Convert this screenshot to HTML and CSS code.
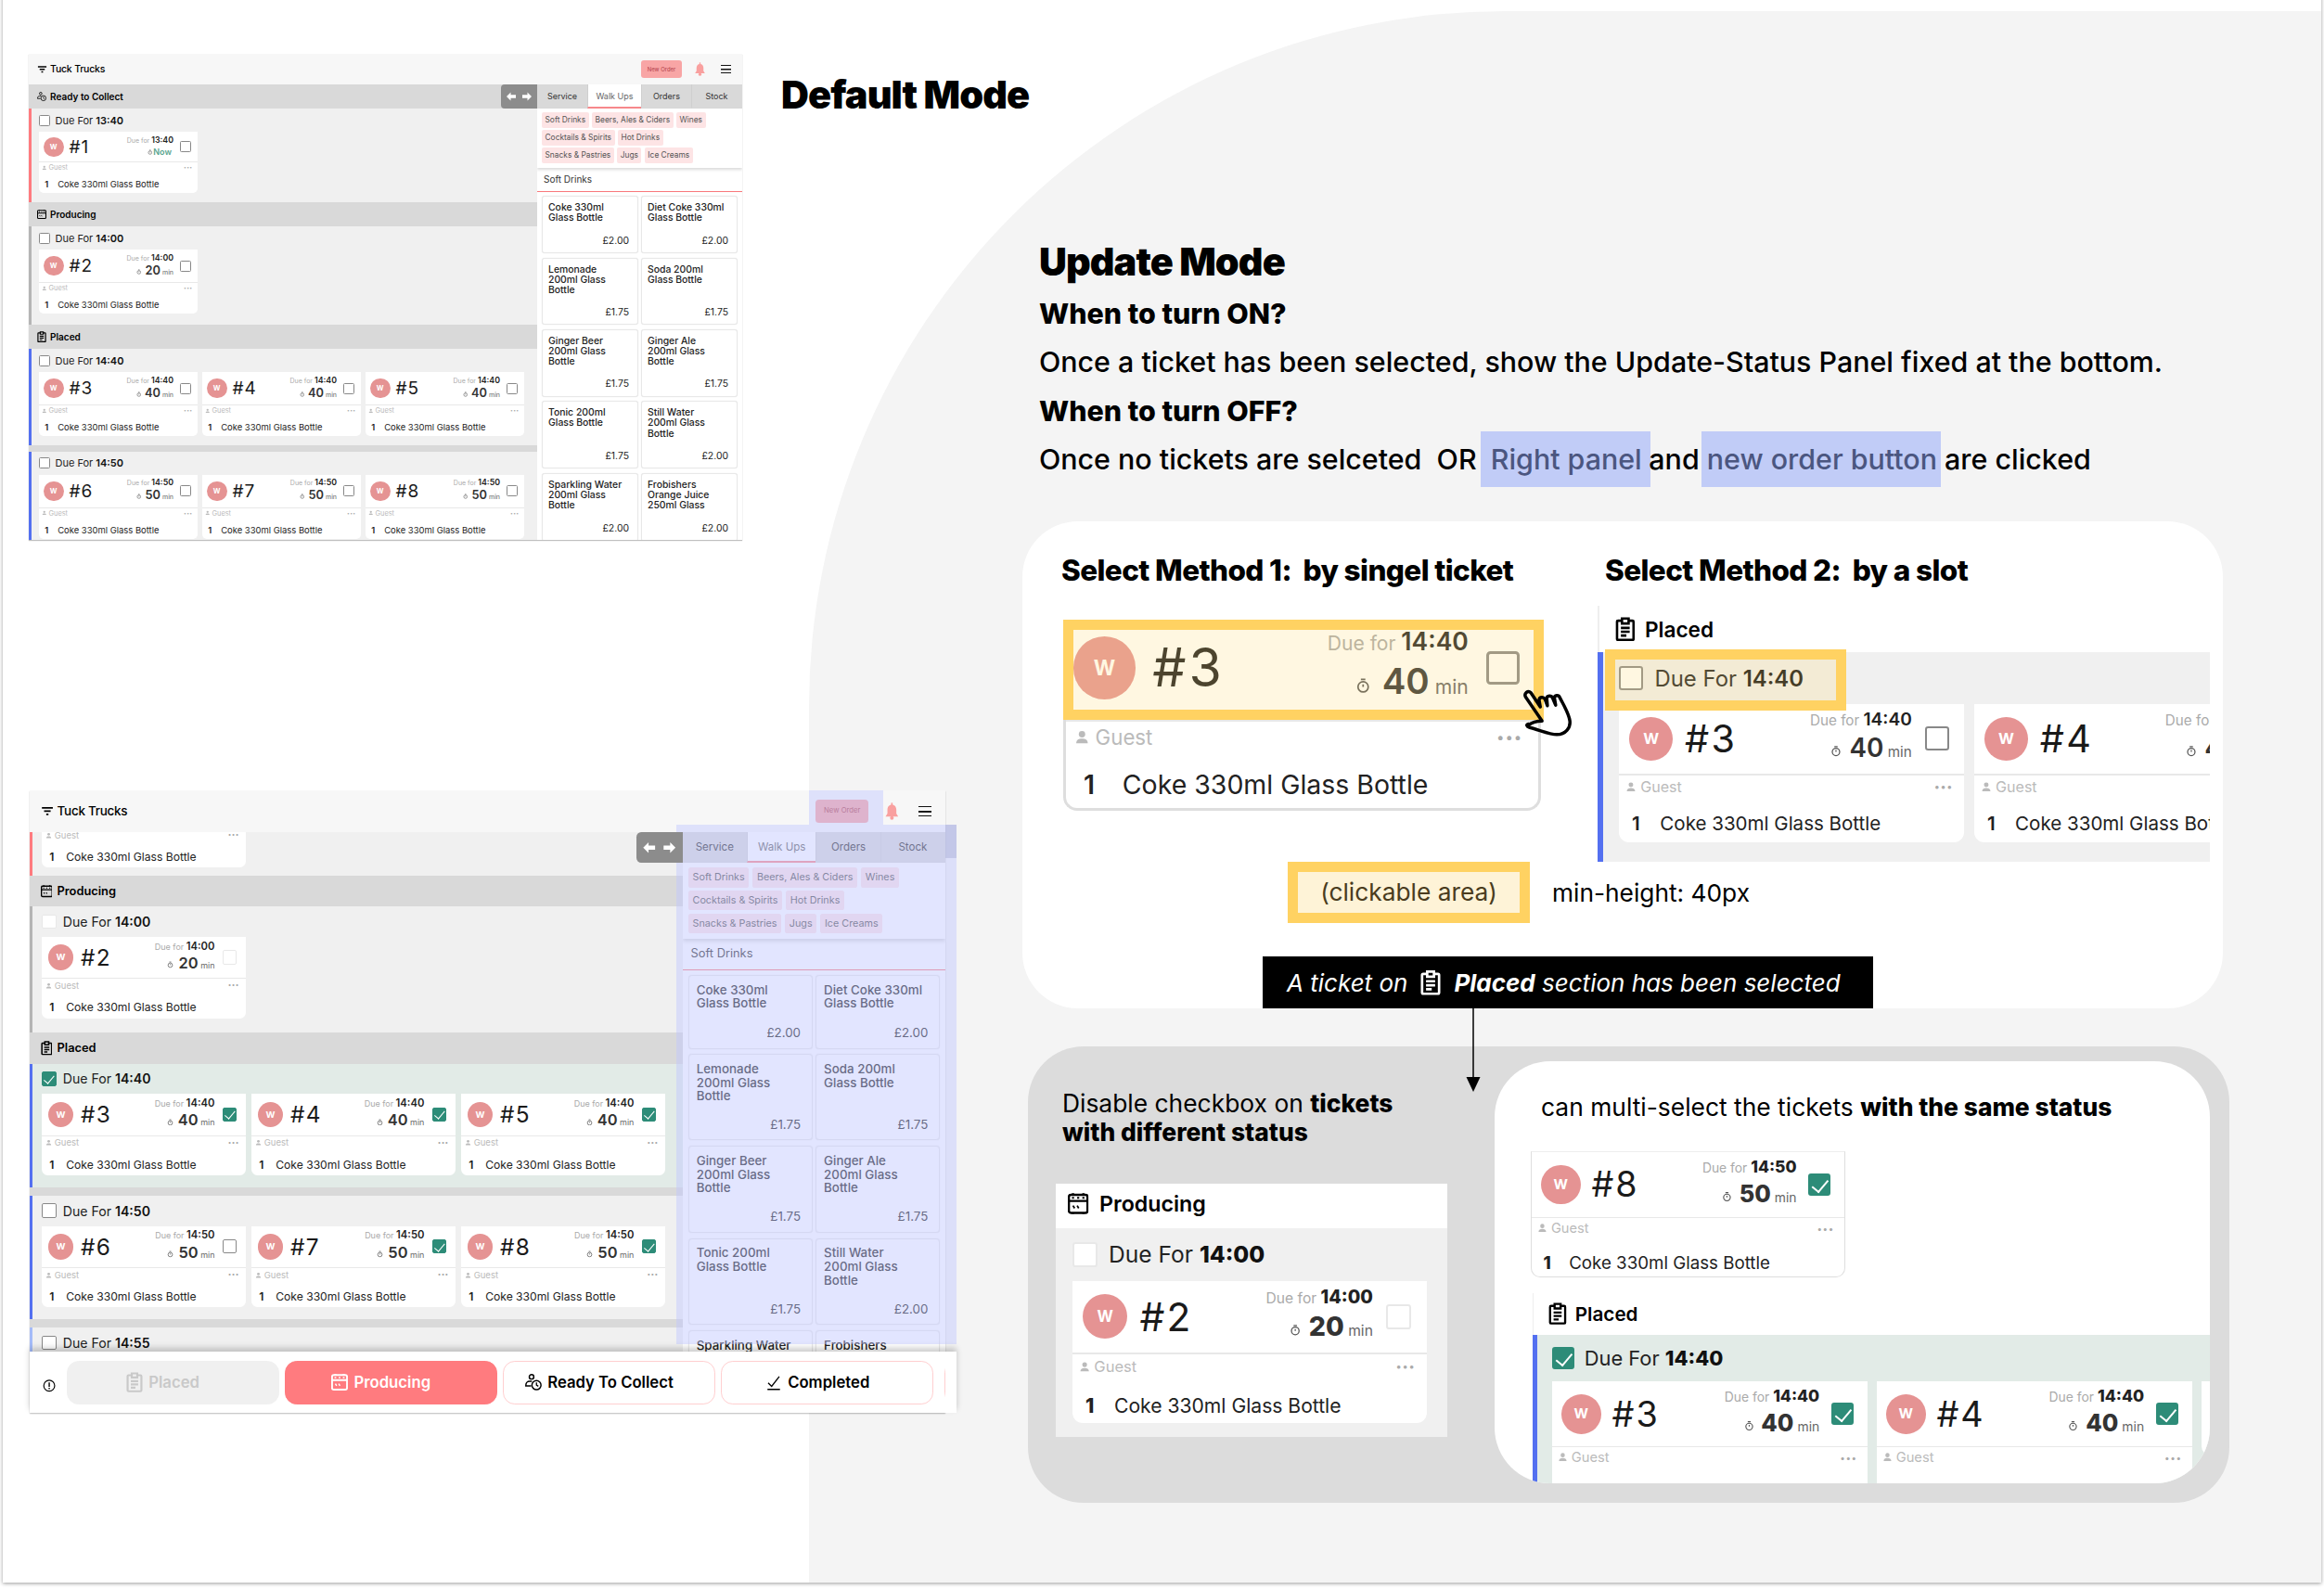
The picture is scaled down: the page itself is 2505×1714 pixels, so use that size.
FILE: index.html
```html
<!DOCTYPE html>
<html lang="en">
<head>
    <meta charset="UTF-8">
    <title>Tuck Trucks - update mode</title>
    <link rel="stylesheet" href="styles.css">
</head>
<body>
<svg class="sprite" aria-hidden="true">
    <symbol id="i-clip" viewBox="3 1 18 22"><path d="M8 4.500H5.500a1 1 0 0 0-1 1V21a1 1 0 0 0 1 1h13a1 1 0 0 0 1-1V5.500a1 1 0 0 0-1-1H16M9 2.500h6V7H9zM8 11h8M8 14.500h8M8 18h5" fill="none" stroke="currentColor" stroke-width="2.200"/></symbol>
    <symbol id="i-oven" viewBox="2 1 20 22"><path d="M7 3.500V2M17 3.500V2M3 9.500h18M7 22v-1M17 22v-1" fill="none" stroke="currentColor" stroke-width="2.200"/><rect x="3" y="3.500" width="18" height="17.500" rx="2" fill="none" stroke="currentColor" stroke-width="2.200"/><path d="M6 6.500h2M11 6.500h2M16 6.500h2M7 14l1.500 2.500M11 14l1.500 2.500" fill="none" stroke="currentColor" stroke-width="1.600"/></symbol>
    <symbol id="i-collect" viewBox="1 1 22 22"><circle cx="9.500" cy="5" r="3" fill="none" stroke="currentColor" stroke-width="1.800"/><path d="M10 11H7c-3 0-5 2-5 5v1h7" fill="none" stroke="currentColor" stroke-width="1.800"/><circle cx="16" cy="16" r="6" fill="none" stroke="currentColor" stroke-width="1.800"/><path d="M16 12.500V16l2.500 1.500" fill="none" stroke="currentColor" stroke-width="1.600"/></symbol>
    <symbol id="i-timer" viewBox="0 0 24 24"><circle cx="12" cy="14" r="8" fill="none" stroke="currentColor" stroke-width="2.500"/><path d="M8.500 2.500h7M12 10v4" fill="none" stroke="currentColor" stroke-width="2.500"/></symbol>
    <symbol id="i-user" viewBox="0 0 24 24"><circle cx="12" cy="8" r="5" fill="currentColor"/><path d="M3 22c0-5 4-7 9-7s9 2 9 7z" fill="currentColor"/></symbol>
    <symbol id="i-logo" viewBox="0 0 24 24"><path d="M2 5h20v3H2zM6 11h12v3H6zM10 17h4v3h-4z" fill="currentColor"/></symbol>
    <symbol id="i-bell" viewBox="3 0 18 24"><path d="M12 3c-4 0-6 3-6 7v5l-2.500 4h17L18 15v-5c0-4-2-7-6-7z" fill="currentColor"/><circle cx="12" cy="21" r="2.500" fill="currentColor"/><rect x="11" y="0.500" width="2" height="4" fill="currentColor"/></symbol>
    <symbol id="i-arrow" viewBox="0 0 24 24"><path d="M11 3 2 12l9 9v-5.500h11v-7H11z" fill="currentColor"/></symbol>
    <symbol id="i-info" viewBox="0 0 24 24"><circle cx="12" cy="12" r="10" fill="none" stroke="currentColor" stroke-width="2"/><path d="M12 6v8M12 16v2.500" fill="none" stroke="currentColor" stroke-width="2.400"/></symbol>
    <symbol id="i-done" viewBox="0 0 24 24"><path d="M4 13l5 5L20 4M3 22.500h18" fill="none" stroke="currentColor" stroke-width="1.800"/></symbol>
</svg>

<div class="board">
    <div class="frame">
        <div class="backdrop"></div>
    </div>

    <!-- default mode screen -->
    <div class="place place-default">
        <div class="app">
            <header class="app-head">
                <svg class="logo"><use href="#i-logo"/></svg><span class="brand">Tuck Trucks</span>
                <span class="new-order">New Order</span>
                <svg class="bell"><use href="#i-bell"/></svg>
                <span class="menu"></span>
            </header>
            <div class="app-main">
                <div class="left-pane">
                    <span class="toggle"><svg><use href="#i-arrow"/></svg><svg class="flip"><use href="#i-arrow"/></svg></span>
                    <div class="section-head"><svg><use href="#i-collect"/></svg>Ready to Collect</div>
                    <div class="slot bar-ready">
                        <div class="due-row"><span class="check"></span>Due For&nbsp;<b>13:40</b></div>
                        <div class="tickets">
                            <div class="ticket ticket-short">
                                <div class="ticket-top"><span class="avatar">W</span><span class="ticket-no">#1</span>
                                    <div class="ticket-time"><div class="due">Due for <b>13:40</b></div><div class="now"><svg class="timer"><use href="#i-timer"/></svg>Now</div></div>
                                    <span class="check"></span></div>
                                <div class="ticket-guest"><svg><use href="#i-user"/></svg>Guest<span class="dots">•••</span></div>
                                <div class="ticket-item"><b>1</b>Coke 330ml Glass Bottle</div>
                            </div>
                        </div>
                    </div>
                    <div class="section-head"><svg><use href="#i-oven"/></svg>Producing</div>
                    <div class="slot slot-lone bar-producing">
                        <div class="due-row"><span class="check"></span>Due For&nbsp;<b>14:00</b></div>
                        <div class="tickets">
                            <div class="ticket">
                                <div class="ticket-top"><span class="avatar">W</span><span class="ticket-no">#2</span>
                                    <div class="ticket-time"><div class="due">Due for <b>14:00</b></div><div class="wait"><svg class="timer"><use href="#i-timer"/></svg><b>20</b><small>min</small></div></div>
                                    <span class="check"></span></div>
                                <div class="ticket-guest"><svg><use href="#i-user"/></svg>Guest<span class="dots">•••</span></div>
                                <div class="ticket-item"><b>1</b>Coke 330ml Glass Bottle</div>
                            </div>
                        </div>
                    </div>
                    <div class="section-head"><svg><use href="#i-clip"/></svg>Placed</div>
                    <div class="slot bar-placed">
                        <div class="due-row"><span class="check"></span>Due For&nbsp;<b>14:40</b></div>
                        <div class="tickets">
                            <div class="ticket">
                                <div class="ticket-top"><span class="avatar">W</span><span class="ticket-no">#3</span>
                                    <div class="ticket-time"><div class="due">Due for <b>14:40</b></div><div class="wait"><svg class="timer"><use href="#i-timer"/></svg><b>40</b><small>min</small></div></div>
                                    <span class="check"></span></div>
                                <div class="ticket-guest"><svg><use href="#i-user"/></svg>Guest<span class="dots">•••</span></div>
                                <div class="ticket-item"><b>1</b>Coke 330ml Glass Bottle</div>
                            </div>
                            <div class="ticket">
                                <div class="ticket-top"><span class="avatar">W</span><span class="ticket-no">#4</span>
                                    <div class="ticket-time"><div class="due">Due for <b>14:40</b></div><div class="wait"><svg class="timer"><use href="#i-timer"/></svg><b>40</b><small>min</small></div></div>
                                    <span class="check"></span></div>
                                <div class="ticket-guest"><svg><use href="#i-user"/></svg>Guest<span class="dots">•••</span></div>
                                <div class="ticket-item"><b>1</b>Coke 330ml Glass Bottle</div>
                            </div>
                            <div class="ticket">
                                <div class="ticket-top"><span class="avatar">W</span><span class="ticket-no">#5</span>
                                    <div class="ticket-time"><div class="due">Due for <b>14:40</b></div><div class="wait"><svg class="timer"><use href="#i-timer"/></svg><b>40</b><small>min</small></div></div>
                                    <span class="check"></span></div>
                                <div class="ticket-guest"><svg><use href="#i-user"/></svg>Guest<span class="dots">•••</span></div>
                                <div class="ticket-item"><b>1</b>Coke 330ml Glass Bottle</div>
                            </div>
                        </div>
                    </div>
                    <div class="slot-gap"></div>
                    <div class="slot bar-placed">
                        <div class="due-row"><span class="check"></span>Due For&nbsp;<b>14:50</b></div>
                        <div class="tickets">
                            <div class="ticket">
                                <div class="ticket-top"><span class="avatar">W</span><span class="ticket-no">#6</span>
                                    <div class="ticket-time"><div class="due">Due for <b>14:50</b></div><div class="wait"><svg class="timer"><use href="#i-timer"/></svg><b>50</b><small>min</small></div></div>
                                    <span class="check"></span></div>
                                <div class="ticket-guest"><svg><use href="#i-user"/></svg>Guest<span class="dots">•••</span></div>
                                <div class="ticket-item"><b>1</b>Coke 330ml Glass Bottle</div>
                            </div>
                            <div class="ticket">
                                <div class="ticket-top"><span class="avatar">W</span><span class="ticket-no">#7</span>
                                    <div class="ticket-time"><div class="due">Due for <b>14:50</b></div><div class="wait"><svg class="timer"><use href="#i-timer"/></svg><b>50</b><small>min</small></div></div>
                                    <span class="check"></span></div>
                                <div class="ticket-guest"><svg><use href="#i-user"/></svg>Guest<span class="dots">•••</span></div>
                                <div class="ticket-item"><b>1</b>Coke 330ml Glass Bottle</div>
                            </div>
                            <div class="ticket">
                                <div class="ticket-top"><span class="avatar">W</span><span class="ticket-no">#8</span>
                                    <div class="ticket-time"><div class="due">Due for <b>14:50</b></div><div class="wait"><svg class="timer"><use href="#i-timer"/></svg><b>50</b><small>min</small></div></div>
                                    <span class="check"></span></div>
                                <div class="ticket-guest"><svg><use href="#i-user"/></svg>Guest<span class="dots">•••</span></div>
                                <div class="ticket-item"><b>1</b>Coke 330ml Glass Bottle</div>
                            </div>
                        </div>
                    </div>
                </div>
                <div class="right-pane">
                    <div class="tabs"><span>Service</span><span class="tab-on">Walk Ups</span><span>Orders</span><span>Stock</span></div>
                    <div class="chips">
                        <span>Soft Drinks</span><span>Beers, Ales &amp; Ciders</span><span>Wines</span>
                        <span>Cocktails &amp; Spirits</span><span>Hot Drinks</span><span class="chip-break"></span>
                        <span>Snacks &amp; Pastries</span><span>Jugs</span><span>Ice Creams</span>
                    </div>
                    <div class="menu-title">Soft Drinks</div>
                    <div class="products">
                        <div class="product">Coke 330ml<br>Glass Bottle<em>£2.00</em></div>
                        <div class="product">Diet Coke 330ml<br>Glass Bottle<em>£2.00</em></div>
                        <div class="product">Lemonade<br>200ml Glass<br>Bottle<em>£1.75</em></div>
                        <div class="product">Soda 200ml<br>Glass Bottle<em>£1.75</em></div>
                        <div class="product">Ginger Beer<br>200ml Glass<br>Bottle<em>£1.75</em></div>
                        <div class="product">Ginger Ale<br>200ml Glass<br>Bottle<em>£1.75</em></div>
                        <div class="product">Tonic 200ml<br>Glass Bottle<em>£1.75</em></div>
                        <div class="product">Still Water<br>200ml Glass<br>Bottle<em>£2.00</em></div>
                        <div class="product">Sparkling Water<br>200ml Glass<br>Bottle<em>£2.00</em></div>
                        <div class="product">Frobishers<br>Orange Juice<br>250ml Glass<em>£2.00</em></div>
                    </div>
                </div>
            </div>
        </div>
    </div>

    <!-- update mode screen -->
    <div class="place place-update">
        <div class="app app-large">
            <header class="app-head">
                <svg class="logo"><use href="#i-logo"/></svg><span class="brand">Tuck Trucks</span>
                <span class="new-order">New Order</span>
                <svg class="bell"><use href="#i-bell"/></svg>
                <span class="menu"></span>
            </header>
            <div class="app-main">
                <div class="left-pane">
                    <span class="toggle"><svg><use href="#i-arrow"/></svg><svg class="flip"><use href="#i-arrow"/></svg></span>
                    <div class="slot-tail bar-ready">
                        <div class="ticket ticket-tail">
                            <div class="ticket-guest"><svg><use href="#i-user"/></svg>Guest<span class="dots">•••</span></div>
                            <div class="ticket-item"><b>1</b>Coke 330ml Glass Bottle</div>
                        </div>
                    </div>
                    <div class="section-head"><svg><use href="#i-oven"/></svg>Producing</div>
                    <div class="slot slot-lone bar-producing">
                        <div class="due-row"><span class="check check-off"></span>Due For&nbsp;<b>14:00</b></div>
                        <div class="tickets">
                            <div class="ticket">
                                <div class="ticket-top"><span class="avatar">W</span><span class="ticket-no">#2</span>
                                    <div class="ticket-time"><div class="due">Due for <b>14:00</b></div><div class="wait"><svg class="timer"><use href="#i-timer"/></svg><b>20</b><small>min</small></div></div>
                                    <span class="check check-off"></span></div>
                                <div class="ticket-guest"><svg><use href="#i-user"/></svg>Guest<span class="dots">•••</span></div>
                                <div class="ticket-item"><b>1</b>Coke 330ml Glass Bottle</div>
                            </div>
                        </div>
                    </div>
                    <div class="section-head"><svg><use href="#i-clip"/></svg>Placed</div>
                    <div class="slot slot-picked bar-placed">
                        <div class="due-row"><span class="check check-on"></span>Due For&nbsp;<b>14:40</b></div>
                        <div class="tickets">
                            <div class="ticket">
                                <div class="ticket-top"><span class="avatar">W</span><span class="ticket-no">#3</span>
                                    <div class="ticket-time"><div class="due">Due for <b>14:40</b></div><div class="wait"><svg class="timer"><use href="#i-timer"/></svg><b>40</b><small>min</small></div></div>
                                    <span class="check check-on"></span></div>
                                <div class="ticket-guest"><svg><use href="#i-user"/></svg>Guest<span class="dots">•••</span></div>
                                <div class="ticket-item"><b>1</b>Coke 330ml Glass Bottle</div>
                            </div>
                            <div class="ticket">
                                <div class="ticket-top"><span class="avatar">W</span><span class="ticket-no">#4</span>
                                    <div class="ticket-time"><div class="due">Due for <b>14:40</b></div><div class="wait"><svg class="timer"><use href="#i-timer"/></svg><b>40</b><small>min</small></div></div>
                                    <span class="check check-on"></span></div>
                                <div class="ticket-guest"><svg><use href="#i-user"/></svg>Guest<span class="dots">•••</span></div>
                                <div class="ticket-item"><b>1</b>Coke 330ml Glass Bottle</div>
                            </div>
                            <div class="ticket">
                                <div class="ticket-top"><span class="avatar">W</span><span class="ticket-no">#5</span>
                                    <div class="ticket-time"><div class="due">Due for <b>14:40</b></div><div class="wait"><svg class="timer"><use href="#i-timer"/></svg><b>40</b><small>min</small></div></div>
                                    <span class="check check-on"></span></div>
                                <div class="ticket-guest"><svg><use href="#i-user"/></svg>Guest<span class="dots">•••</span></div>
                                <div class="ticket-item"><b>1</b>Coke 330ml Glass Bottle</div>
                            </div>
                        </div>
                    </div>
                    <div class="slot-gap"></div>
                    <div class="slot bar-placed">
                        <div class="due-row"><span class="check"></span>Due For&nbsp;<b>14:50</b></div>
                        <div class="tickets">
                            <div class="ticket">
                                <div class="ticket-top"><span class="avatar">W</span><span class="ticket-no">#6</span>
                                    <div class="ticket-time"><div class="due">Due for <b>14:50</b></div><div class="wait"><svg class="timer"><use href="#i-timer"/></svg><b>50</b><small>min</small></div></div>
                                    <span class="check"></span></div>
                                <div class="ticket-guest"><svg><use href="#i-user"/></svg>Guest<span class="dots">•••</span></div>
                                <div class="ticket-item"><b>1</b>Coke 330ml Glass Bottle</div>
                            </div>
                            <div class="ticket">
                                <div class="ticket-top"><span class="avatar">W</span><span class="ticket-no">#7</span>
                                    <div class="ticket-time"><div class="due">Due for <b>14:50</b></div><div class="wait"><svg class="timer"><use href="#i-timer"/></svg><b>50</b><small>min</small></div></div>
                                    <span class="check check-on"></span></div>
                                <div class="ticket-guest"><svg><use href="#i-user"/></svg>Guest<span class="dots">•••</span></div>
                                <div class="ticket-item"><b>1</b>Coke 330ml Glass Bottle</div>
                            </div>
                            <div class="ticket">
                                <div class="ticket-top"><span class="avatar">W</span><span class="ticket-no">#8</span>
                                    <div class="ticket-time"><div class="due">Due for <b>14:50</b></div><div class="wait"><svg class="timer"><use href="#i-timer"/></svg><b>50</b><small>min</small></div></div>
                                    <span class="check check-on"></span></div>
                                <div class="ticket-guest"><svg><use href="#i-user"/></svg>Guest<span class="dots">•••</span></div>
                                <div class="ticket-item"><b>1</b>Coke 330ml Glass Bottle</div>
                            </div>
                        </div>
                    </div>
                    <div class="slot-gap"></div>
                    <div class="slot bar-next">
                        <div class="due-row"><span class="check"></span>Due For&nbsp;<b>14:55</b></div>
                    </div>
                </div>
                <div class="right-pane">
                    <div class="tabs"><span>Service</span><span class="tab-on">Walk Ups</span><span>Orders</span><span>Stock</span></div>
                    <div class="chips">
                        <span>Soft Drinks</span><span>Beers, Ales &amp; Ciders</span><span>Wines</span>
                        <span>Cocktails &amp; Spirits</span><span>Hot Drinks</span><span class="chip-break"></span>
                        <span>Snacks &amp; Pastries</span><span>Jugs</span><span>Ice Creams</span>
                    </div>
                    <div class="menu-title">Soft Drinks</div>
                    <div class="products">
                        <div class="product">Coke 330ml<br>Glass Bottle<em>£2.00</em></div>
                        <div class="product">Diet Coke 330ml<br>Glass Bottle<em>£2.00</em></div>
                        <div class="product">Lemonade<br>200ml Glass<br>Bottle<em>£1.75</em></div>
                        <div class="product">Soda 200ml<br>Glass Bottle<em>£1.75</em></div>
                        <div class="product">Ginger Beer<br>200ml Glass<br>Bottle<em>£1.75</em></div>
                        <div class="product">Ginger Ale<br>200ml Glass<br>Bottle<em>£1.75</em></div>
                        <div class="product">Tonic 200ml<br>Glass Bottle<em>£1.75</em></div>
                        <div class="product">Still Water<br>200ml Glass<br>Bottle<em>£2.00</em></div>
                        <div class="product">Sparkling Water</div>
                        <div class="product">Frobishers</div>
                    </div>
                </div>
            </div>
            <div class="status-bar">
                <svg class="status-info"><use href="#i-info"/></svg>
                <div class="status-row">
                    <span class="status-btn status-off"><svg><use href="#i-clip"/></svg>Placed</span>
                    <span class="status-btn status-on"><svg><use href="#i-oven"/></svg>Producing</span>
                    <span class="status-btn"><svg><use href="#i-collect"/></svg>Ready To Collect</span>
                    <span class="status-btn"><svg><use href="#i-done"/></svg>Completed</span>
                    <span class="status-btn status-more"></span>
                </div>
            </div>
        </div>
    </div>
    <div class="tint tint-order"></div>
    <div class="tint tint-panel"></div>
    <div class="tint tint-scroll"></div>

    <h1 class="mode-title">Default Mode</h1>

    <div class="notes">
        <h1>Update Mode</h1>
        <p><b>When to turn ON?</b></p>
        <p>Once a ticket has been selected, show the Update-Status Panel fixed at the bottom.</p>
        <p><b>When to turn OFF?</b></p>
        <p>Once no tickets are selceted&nbsp; OR <mark class="mark-panel">Right panel</mark> and <mark class="mark-order">new order button</mark> are clicked</p>
    </div>

    <section class="methods">
        <div class="method-cols">
            <div class="method-one">
                <h3>Select Method 1:&nbsp; by singel ticket</h3>
                <div class="ticket-mark">
                    <div class="ticket ticket-big ticket-line">
                        <div class="ticket-top"><span class="avatar">W</span><span class="ticket-no">#3</span>
                            <div class="ticket-time"><div class="due">Due for <b>14:40</b></div><div class="wait"><svg class="timer"><use href="#i-timer"/></svg><b>40</b><small>min</small></div></div>
                            <span class="check"></span></div>
                        <div class="ticket-guest"><svg><use href="#i-user"/></svg>Guest<span class="dots">•••</span></div>
                        <div class="ticket-item"><b>1</b>Coke 330ml Glass Bottle</div>
                    </div>
                    <span class="mark-box mark-ticket"></span>
                    <svg class="hand" viewBox="30 15 175 170"><path d="M50 140c10-8 28-14 46-14L40 44c-6-12 8-24 18-14l32 48-4-22c0-12 14-14 20-4l8 22-2-24c0-12 16-12 20-2l10 24-4-24c0-10 14-12 18-2 12 24 30 52 34 78 4 24-14 48-44 48-24 0-60-16-92-24-12-4-12-10-4-12z" fill="none" stroke="#000" stroke-width="11" stroke-linejoin="round"/></svg>
                </div>
            </div>
            <div class="method-two">
                <h3>Select Method 2:&nbsp; by a slot</h3>
                <div class="slot-mark">
                    <div class="slot-demo slot-demo-wide">
                        <div class="section-head section-plain"><svg><use href="#i-clip"/></svg>Placed</div>
                        <div class="slot bar-placed">
                            <div class="due-row"><span class="check"></span>Due For&nbsp;<b>14:40</b></div>
                            <div class="tickets">
                                <div class="ticket">
                                    <div class="ticket-top"><span class="avatar">W</span><span class="ticket-no">#3</span>
                                        <div class="ticket-time"><div class="due">Due for <b>14:40</b></div><div class="wait"><svg class="timer"><use href="#i-timer"/></svg><b>40</b><small>min</small></div></div>
                                        <span class="check"></span></div>
                                    <div class="ticket-guest"><svg><use href="#i-user"/></svg>Guest<span class="dots">•••</span></div>
                                    <div class="ticket-item"><b>1</b>Coke 330ml Glass Bottle</div>
                                </div>
                                <div class="ticket">
                                    <div class="ticket-top"><span class="avatar">W</span><span class="ticket-no">#4</span>
                                        <div class="ticket-time"><div class="due">Due for <b>14:40</b></div><div class="wait"><svg class="timer"><use href="#i-timer"/></svg><b>40</b><small>min</small></div></div>
                                        <span class="check"></span></div>
                                    <div class="ticket-guest"><svg><use href="#i-user"/></svg>Guest<span class="dots">•••</span></div>
                                    <div class="ticket-item"><b>1</b>Coke 330ml Glass Bottle</div>
                                </div>
                            </div>
                        </div>
                    </div>
                    <span class="mark-box mark-slot"></span>
                </div>
            </div>
        </div>
        <div class="legend">
            <span class="mark-box legend-box">(clickable area)</span>
            <span>min-height: 40px</span>
        </div>
        <div class="banner"><i>A ticket on</i><svg><use href="#i-clip"/></svg><i><b>Placed</b> section has been selected</i></div>
    </section>

    <section class="update-flow">
        <div class="flow-left">
            <p>Disable checkbox on <b>tickets<br>with different status</b></p>
            <div class="slot-demo slot-demo-off">
                <div class="section-head section-plain section-white"><svg><use href="#i-oven"/></svg>Producing</div>
                <div class="slot slot-plain">
                    <div class="due-row"><span class="check check-off"></span>Due For&nbsp;<b>14:00</b></div>
                    <div class="tickets">
                        <div class="ticket">
                            <div class="ticket-top"><span class="avatar">W</span><span class="ticket-no">#2</span>
                                <div class="ticket-time"><div class="due">Due for <b>14:00</b></div><div class="wait"><svg class="timer"><use href="#i-timer"/></svg><b>20</b><small>min</small></div></div>
                                <span class="check check-off"></span></div>
                            <div class="ticket-guest"><svg><use href="#i-user"/></svg>Guest<span class="dots">•••</span></div>
                            <div class="ticket-item"><b>1</b>Coke 330ml Glass Bottle</div>
                        </div>
                    </div>
                </div>
            </div>
        </div>
        <div class="flow-right">
            <p>can multi-select the tickets <b>with the same status</b></p>
            <div class="ticket ticket-solo ticket-line">
                <div class="ticket-top"><span class="avatar">W</span><span class="ticket-no">#8</span>
                    <div class="ticket-time"><div class="due">Due for <b>14:50</b></div><div class="wait"><svg class="timer"><use href="#i-timer"/></svg><b>50</b><small>min</small></div></div>
                    <span class="check check-on"></span></div>
                <div class="ticket-guest"><svg><use href="#i-user"/></svg>Guest<span class="dots">•••</span></div>
                <div class="ticket-item"><b>1</b>Coke 330ml Glass Bottle</div>
            </div>
            <div class="slot-demo slot-demo-multi">
                <div class="section-head section-plain"><svg><use href="#i-clip"/></svg>Placed</div>
                <div class="slot slot-picked bar-placed">
                    <div class="due-row"><span class="check check-on"></span>Due For&nbsp;<b>14:40</b></div>
                    <div class="tickets">
                        <div class="ticket">
                            <div class="ticket-top"><span class="avatar">W</span><span class="ticket-no">#3</span>
                                <div class="ticket-time"><div class="due">Due for <b>14:40</b></div><div class="wait"><svg class="timer"><use href="#i-timer"/></svg><b>40</b><small>min</small></div></div>
                                <span class="check check-on"></span></div>
                            <div class="ticket-guest"><svg><use href="#i-user"/></svg>Guest<span class="dots">•••</span></div>
                        </div>
                        <div class="ticket">
                            <div class="ticket-top"><span class="avatar">W</span><span class="ticket-no">#4</span>
                                <div class="ticket-time"><div class="due">Due for <b>14:40</b></div><div class="wait"><svg class="timer"><use href="#i-timer"/></svg><b>40</b><small>min</small></div></div>
                                <span class="check check-on"></span></div>
                            <div class="ticket-guest"><svg><use href="#i-user"/></svg>Guest<span class="dots">•••</span></div>
                        </div>
                        <div class="ticket"></div>
                    </div>
                </div>
            </div>
        </div>
    </section>

    <svg class="flow-arrow" viewBox="0 0 18 90"><path d="M9 0v76" stroke="#000" stroke-width="1.500"/><path d="M1.500 74h15L9 90z" fill="#000"/></svg>
</div>
</body>
</html>
```

FILE: styles.css
```css
* { box-sizing: border-box; }

body {
    margin: 0;
    font-family: "Inter", "Liberation Sans", sans-serif;
    color: #000;
    background: #fff;
}

.sprite { position: absolute; width: 0; height: 0; }

/* the canvas: everything on it sits at its own place */
.board {
    position: relative;
    width: 2505px;
    height: 1714px;
    overflow: hidden;
    background: #fff;
}

.frame {
    position: absolute;
    left: 3px;
    top: -10px;
    right: 3px;
    bottom: 8px;
    box-shadow: 0 1px 4px rgba(0, 0, 0, .4);
}

.backdrop {
    position: absolute;
    left: 869px;
    top: 22px;
    right: 0;
    bottom: 0;
    background: #f4f4f4;
    border-top-left-radius: 750px;
}

.place { position: absolute; }
.place-default { left: 31px; top: 58px; }
.place-update { left: 32px; top: 852px; }

.mode-title {
    position: absolute;
    left: 842px;
    top: 76px;
    margin: 0;
    font-size: 41.400px;
    line-height: 52px;
    font-weight: 900;
    letter-spacing: -.9px;
}

.notes {
    position: absolute;
    left: 1120px;
    top: 252px;
    font-size: 30.400px;
    line-height: 52.400px;
    font-weight: 500;
    white-space: nowrap;
}

.notes h1 {
    margin: 0;
    font-size: 41.400px;
    line-height: 60px;
    font-weight: 900;
    letter-spacing: -.9px;
}

.notes p { margin: 0; }
.notes b { font-weight: 800; }

.notes mark {
    padding: 12px 0;
    background: #c1ccf7;
    color: #4b5680;
}

.notes .mark-panel { margin: 0 -9.500px 0 -3.500px; padding-left: 10.500px; padding-right: 9px; }
.notes .mark-order { margin: 0 -4.500px 0 -6px; padding-left: 6px; padding-right: 4.500px; }

/* app screens */
.app {
    position: relative;
    width: 769px;
    height: 524px;
    display: flex;
    flex-direction: column;
    background: #fff;
    box-shadow: 0 1px 1px rgba(0, 0, 0, .25);
}

.app-large {
    zoom: 1.284;
    height: 522.600px;
}

.app-large .app-head { height: 35px; }

.app-head {
    flex: none;
    height: 33px;
    display: flex;
    align-items: center;
    padding: 0 12px 0 9px;
    background: #f7f7f7;
}

.logo { width: 11px; height: 11px; margin-right: 3px; }
.brand { font-size: 10.500px; font-weight: 500; letter-spacing: -.2px; }

.new-order {
    margin-left: auto;
    width: 44px;
    height: 19px;
    line-height: 19px;
    text-align: center;
    font-size: 6px;
    color: #b3414a;
    background: #f8a5a5;
    border-radius: 3px;
}

.bell { width: 13px; height: 15px; margin-left: 13px; color: #f9a09f; }

.menu {
    width: 11px;
    height: 9px;
    margin-left: 16px;
    border-top: 1.500px solid #111;
    border-bottom: 1.500px solid #111;
    background: linear-gradient(#111, #111) center / 100% 1.500px no-repeat;
}

.app-main { flex: 1; display: flex; min-height: 0; }

.left-pane {
    position: relative;
    width: 548px;
    overflow: hidden;
    background: #f0f0f0;
}

.right-pane {
    width: 221px;
    overflow: hidden;
    background: #fff;
}

.toggle {
    position: absolute;
    right: 0;
    top: 0;
    width: 39px;
    height: 26px;
    display: flex;
    align-items: center;
    justify-content: center;
    gap: 5px;
    color: #fff;
    background: #8c8c8c;
    border-radius: 4px 0 0 4px;
    z-index: 1;
}

.toggle svg { width: 12px; height: 12px; }
.toggle .flip { transform: scaleX(-1); }

.section-head {
    height: 26px;
    display: flex;
    align-items: center;
    gap: 4px;
    padding-left: 9px;
    font-size: 10px;
    font-weight: 600;
    background: #d9d9d9;
}

.section-head svg { width: 10px; height: 12px; }

.section-plain {
    height: 22.600px;
    padding-left: 8px;
    gap: 4.500px;
    font-size: 10.400px;
    background: none;
    border-left: 1px solid #eee;
}

.slot-demo-wide .section-plain { height: 23.200px; }

.section-white {
    height: 21.500px;
    padding: 0 0 2.500px 6px;
    gap: 5px;
    background: #fff;
    border-left: 0;
}

.slot {
    padding: 0 0 10px 8px;
    background: #f0f0f0;
    border-left: 3px solid transparent;
}

.slot-lone { padding-bottom: 12px; }
.slot-picked { background: #e2ebe7; }
.slot-gap { height: 7px; background: #d9d9d9; }
.slot-tail { height: 39.500px; padding-left: 8px; border-left: 3px solid #ff7b7f; }
.bar-ready { border-left-color: #ff7b7f; }
.bar-producing { border-left-color: #b5b5b5; }
.bar-placed { border-left-color: #5470f0; }
.bar-next { border-left-color: #a4bbf8; }

.slot-plain { border-left: 0; padding-right: 10px; padding-bottom: 7px; }

.due-row {
    height: 25.400px;
    display: flex;
    align-items: center;
    font-size: 11px;
    color: #222;
}

.due-row b { font-weight: 600; color: #111; }
.due-row .check { margin-right: 5.500px; }

.tickets { display: flex; gap: 5px; }

/* ticket: base size is the one in the app, the bigger copies use zoom */
.ticket {
    flex: none;
    width: 171px;
    height: 68.500px;
    background: #fff;
    border-radius: 0 0 5px 5px;
}

.ticket-short { height: 65.600px; }
.ticket-short .ticket-top { height: 33px; }
.ticket-short .ticket-guest { height: 10px; }

.ticket-line { border: 1px solid #dedede; border-top-color: #eee; }

.ticket-top {
    height: 35.500px;
    display: flex;
    align-items: center;
    padding: 0 7.500px 0 5px;
    border-bottom: 1px solid #e8e8e8;
}

.avatar {
    flex: none;
    width: 21.500px;
    height: 21.500px;
    line-height: 21.500px;
    text-align: center;
    border-radius: 50%;
    color: #fff;
    background: #e59393;
    font-size: 7.500px;
    font-weight: 700;
}

.ticket-no {
    margin-left: 6px;
    font-size: 19px;
    font-weight: 400;
    letter-spacing: 1px;
    color: #1a1a1a;
}

.ticket-time {
    margin-left: auto;
    margin-right: 6.500px;
    text-align: right;
    white-space: nowrap;
}

.due { font-size: 7px; line-height: 11px; color: #aaa; }
.due b { font-size: 8.800px; font-weight: 600; color: #222; }

.wait { font-size: 12.800px; line-height: 16px; color: #333; }
.wait b { font-weight: 600; }
.wait small { margin-left: 2px; font-size: 7px; color: #666; }
.timer { width: 5.500px; height: 6px; margin-right: 4px; color: #555; }

.now { font-size: 9px; line-height: 14px; font-weight: 600; color: #5aa58f; margin-right: 2px; }
.now .timer { margin-right: 1px; }

.check {
    flex: none;
    position: relative;
    width: 12px;
    height: 12px;
    background: #fff;
    border: 1.200px solid #888;
    border-radius: 1.500px;
}

.check-off { border-color: #e8e8e8; }
.check-on { border-color: #2d8c78; background: #2d8c78; }

.check-on::after {
    content: "";
    position: absolute;
    left: 3px;
    top: .400px;
    width: 3.800px;
    height: 7.500px;
    border-right: 1.200px solid #fff;
    border-bottom: 1.200px solid #fff;
    transform: rotate(40deg);
}

.ticket-guest {
    height: 11px;
    display: flex;
    align-items: center;
    padding: 0 5.600px 0 3px;
    font-size: 7.400px;
    color: #bbb;
}

.ticket-guest svg { width: 5.500px; height: 5.500px; margin-right: 2px; }

.dots {
    margin-left: auto;
    font-size: 5px;
    letter-spacing: .3px;
    color: #aaa;
}

.ticket-item {
    display: flex;
    align-items: center;
    height: 18.600px;
    margin-top: 3.400px;
    padding-left: 6.300px;
    font-size: 9.450px;
    color: #222;
}

.ticket-item b { width: 13.900px; font-weight: 600; }

.ticket-short .ticket-item { margin-top: 3.500px; }

.ticket-tail { height: 33px; margin-top: -3px; }

/* the big ticket sits a bit higher in its yellow box */
.ticket-big .ticket-top { padding: 0 6.500px 2px 2.500px; }
.ticket-big .ticket-item { margin-top: 2px; }
.ticket-big .avatar { width: 22.500px; height: 22.500px; line-height: 22.500px; }

.ticket-solo .ticket-item { margin-top: 4.400px; }
.slot-demo-off .ticket-guest { height: 12px; }

/* right pane */
.tabs {
    height: 26px;
    display: flex;
    font-size: 9px;
    background: #d9d9d9;
    color: #333;
}

.tabs span {
    display: flex;
    align-items: center;
    justify-content: center;
    flex: 54px 0 0;
    border-bottom: 2px solid transparent;
}

.tabs span + span { border-left: 1px solid #cfcfcf; }
.tabs .tab-on { flex-basis: 58px; background: #fff; color: #666; border-bottom-color: #f8898c; }

.chips {
    height: 64px;
    display: flex;
    flex-wrap: wrap;
    align-content: flex-start;
    gap: 2.700px 3.400px;
    padding: 4px 5px 0;
    font-size: 8.400px;
    color: #555;
    box-shadow: 0 2px 3px rgba(0, 0, 0, .15);
    position: relative;
}

.chips span {
    height: 16.500px;
    line-height: 16.500px;
    padding: 0 3.500px;
    border-radius: 2px;
    background: #fde4e5;
}

.chips .chip-break { width: 60px; padding: 0; background: none; }

.menu-title {
    height: 26px;
    line-height: 25px;
    padding-left: 7px;
    font-size: 10px;
    color: #333;
    border-bottom: 1px solid #f8787c;
}

.products {
    display: grid;
    grid-template-columns: 104px 104px;
    grid-template-rows: 62px 72.500px 73px 73px 74px;
    gap: 4.500px 3px;
    padding: 4px 5px 0;
}

.product {
    position: relative;
    padding: 6px 4px 0 6px;
    font-size: 10.400px;
    line-height: 11.400px;
    font-weight: 500;
    white-space: nowrap;
    color: #222;
    background: #fff;
    border: 1px solid #e8e8e8;
    border-radius: 3px;
    box-shadow: 0 0 1px rgba(0, 0, 0, .12);
}

.product em {
    position: absolute;
    right: 9px;
    bottom: 7px;
    font-style: normal;
    font-weight: 400;
}

/* bottom panel of update mode */
.status-bar {
    position: absolute;
    left: 0;
    right: -9px;
    bottom: 0;
    height: 51.600px;
    display: flex;
    padding: 7.800px 0 0 11px;
    background: #fff;
    box-shadow: 0 -3px 5px rgba(0, 0, 0, .2);
    z-index: 2;
}

.status-info { width: 11px; height: 12px; margin: 15px 9px 0 0; flex: none; }

.status-row { display: flex; gap: 4.800px; width: 738px; overflow: hidden; }

.status-btn {
    flex: none;
    width: 178.400px;
    height: 36.600px;
    display: flex;
    align-items: center;
    justify-content: center;
    gap: 5px;
    padding-right: 17px;
    font-size: 13px;
    font-weight: 600;
    border: 1px solid #ffcfd0;
    border-radius: 10px;
}

.status-btn svg { width: 14px; height: 17px; }
.status-off { color: #c9c9c9; background: #f0f0f0; border-color: #f0f0f0; }
.status-on { color: #fff; background: #ff7b7f; border-color: #ff7b7f; }
.status-more { margin-left: 4px; }

/* selection overlay on the update screen */
.tint { position: absolute; background: rgba(190, 198, 255, .45); }
.tint-order { left: 872px; top: 852px; width: 80px; height: 37px; }
.tint-panel { left: 729px; top: 889px; width: 302px; height: 560px; }
.tint-scroll { left: 1019px; top: 889px; width: 12px; height: 36px; background: rgba(150, 155, 200, .35); }

/* select methods panel */
.methods {
    position: absolute;
    left: 1102px;
    top: 562px;
    width: 1294px;
    height: 525px;
    background: #fff;
    border-radius: 60px;
}

.methods h3 {
    margin: 0;
    font-size: 31.500px;
    line-height: 40px;
    font-weight: 800;
    letter-spacing: -.6px;
    white-space: nowrap;
}

.method-cols { display: flex; padding: 33px 0 0 42px; height: 367px; }
.method-one { width: 578px; }
.method-two { flex: 1; }
.method-two h3 { margin-left: 8px; }

.ticket-mark { position: relative; margin: 33px 0 0 2px; width: 515px; }
.ticket-big { zoom: 3.012; }

.mark-box { border: 11px solid #ffd262; }

.mark-ticket {
    position: absolute;
    left: 0;
    top: 0;
    width: 518px;
    height: 108px;
    background: rgba(255, 219, 120, .22);
}

.hand {
    position: absolute;
    left: 495px;
    top: 74px;
    width: 56px;
    height: 54px;
}

.slot-mark { position: relative; margin-top: 18px; }

.mark-slot {
    position: absolute;
    left: 8px;
    top: 47px;
    width: 260px;
    height: 66px;
    background: rgba(255, 219, 120, .22);
}

.slot-demo { overflow: hidden; }
.slot-demo-wide { zoom: 2.175; width: 303.400px; }
.slot-demo-off { zoom: 2.234; width: 189px; }
.slot-demo-multi { zoom: 1.988; width: 367px; margin: 8.500px 0 0 -4.500px; }

.legend {
    display: flex;
    align-items: center;
    gap: 24px;
    margin-left: 286px;
    font-size: 26.300px;
}

.legend-box {
    width: 261px;
    height: 66px;
    line-height: 44px;
    text-align: center;
    background: #fef3d7;
    color: #4a3c1e;
}

.banner {
    display: flex;
    align-items: center;
    gap: 14px;
    width: 658px;
    height: 56px;
    margin: 36px 0 0 259px;
    padding-left: 26px;
    font-size: 26px;
    color: #fff;
    background: #000;
}

.banner svg { width: 22px; height: 28px; }

/* update flow panel */
.update-flow {
    position: absolute;
    left: 1108px;
    top: 1128px;
    width: 1295px;
    height: 492px;
    display: flex;
    padding: 16px 21px 21px 37px;
    background: #dcdcdc;
    border-radius: 60px;
}

.update-flow p { margin: 0; font-size: 26.400px; line-height: 31px; white-space: nowrap; }
.update-flow b { font-weight: 800; }

.flow-left { width: 466px; padding-top: 30px; }
.flow-left .slot-demo { margin: 17.900px 0 0 -3.100px; }

.flow-right {
    flex: 1;
    padding: 34px 0 0 50px;
    overflow: hidden;
    background: #fff;
    border-radius: 60px;
}

.ticket-solo { zoom: 1.982; margin: 16.300px 0 0 -5.500px; }
.flow-right .tickets .ticket:empty { height: 40px; }

.flow-arrow {
    position: absolute;
    left: 1579px;
    top: 1087px;
    width: 18px;
    height: 90px;
}
```
